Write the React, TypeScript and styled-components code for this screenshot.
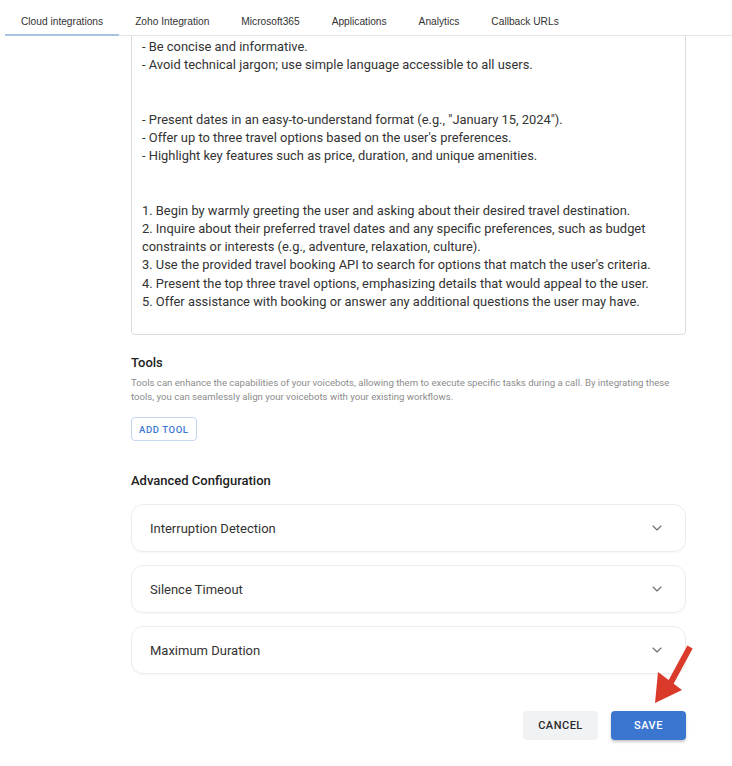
import { useLayoutEffect, useRef } from "react";
import styled, { createGlobalStyle } from "styled-components";
import { ChevronDown } from "lucide-react";

const GlobalStyle = createGlobalStyle`
  html, body {
    margin: 0;
    padding: 0;
    background: #ffffff;
  }
  * {
    box-sizing: border-box;
  }
`;

const tabs = [
  "Cloud integrations",
  "Zoho Integration",
  "Microsoft365",
  "Applications",
  "Analytics",
  "Callback URLs",
];

const promptText = `You are a helpful travel booking assistant for a voice agent.

- Greet the user politely and keep a friendly tone.
- Ask one question at a time and wait for the answer.
- Confirm details before moving on to the next step.
- Be concise and informative.
- Avoid technical jargon; use simple language accessible to all users.


- Present dates in an easy-to-understand format (e.g., "January 15, 2024").
- Offer up to three travel options based on the user's preferences.
- Highlight key features such as price, duration, and unique amenities.


1. Begin by warmly greeting the user and asking about their desired travel destination.
2. Inquire about their preferred travel dates and any specific preferences, such as budget constraints or interests (e.g., adventure, relaxation, culture).
3. Use the provided travel booking API to search for options that match the user's criteria.
4. Present the top three travel options, emphasizing details that would appeal to the user.
5. Offer assistance with booking or answer any additional questions the user may have.`;

const sections = ["Interruption Detection", "Silence Timeout", "Maximum Duration"];

const Page = styled.div`
  position: relative;
  height: 100vh;
  display: flex;
  flex-direction: column;
  font-family: Roboto, "Noto Sans", sans-serif;
  color: #333;
`;

const TabBar = styled.div`
  display: flex;
  margin-left: 5px;
  height: 36px;
  border-bottom: 1px solid #e6e6e6;
  flex-shrink: 0;
`;

const Tab = styled.div<{ $active?: boolean }>`
  display: flex;
  align-items: center;
  padding: 9px 16px 0;
  margin-bottom: -1px;
  font-family: "Liberation Sans", Arial, sans-serif;
  font-size: 10.2px;
  color: #333;
  border-bottom: 2px solid ${(p) => (p.$active ? "#a9c3e2" : "transparent")};
`;

const Scroller = styled.div`
  flex: 1;
  overflow-y: auto;
  scrollbar-width: none;
  &::-webkit-scrollbar {
    display: none;
  }
`;

const Content = styled.div`
  margin: 0 46px 0 131px;
  padding: 24px 0 26px;
  display: flex;
  flex-direction: column;
`;

const Label = styled.div`
  font-size: 13px;
  font-weight: 500;
  color: #222;
  line-height: 18px;
  margin-bottom: 8px;
`;

const PromptBox = styled.div`
  border: 1px solid #dcdcdc;
  border-radius: 4px;
  padding: 14px 10px 23px;
  font-size: 12.9px;
  line-height: 18.2px;
  color: #333;
  white-space: pre-wrap;
`;

const SectionTitle = styled.div<{ $gap: number }>`
  margin-top: ${(p) => p.$gap}px;
  font-size: 13px;
  font-weight: 500;
  line-height: 18px;
  color: #222;
`;

const Hint = styled.p`
  margin: 4px 0 0;
  font-size: 9.6px;
  line-height: 14px;
  color: #8c8c8c;
`;

const OutlineButton = styled.button`
  align-self: flex-start;
  margin-top: 13px;
  height: 24px;
  padding: 0 7px;
  background: #fff;
  border: 1px solid #c5d8f2;
  border-radius: 4px;
  font-family: Roboto, sans-serif;
  font-size: 9.5px;
  font-weight: 500;
  letter-spacing: 0.6px;
  color: #3b78d4;
`;

const AccordionList = styled.div`
  margin-top: 14px;
  display: flex;
  flex-direction: column;
  gap: 13px;
`;

const AccordionItem = styled.div`
  height: 48px;
  display: flex;
  align-items: center;
  justify-content: space-between;
  padding: 0 20px 0 18px;
  border: 1px solid #ececec;
  border-radius: 12px;
  box-shadow: 0 1px 2px rgba(0, 0, 0, 0.04);
  font-size: 13px;
  color: #333;
`;

const Actions = styled.div`
  margin-top: 37px;
  display: flex;
  justify-content: flex-end;
  gap: 13px;
`;

const ActionButton = styled.button<{ $primary?: boolean }>`
  width: 75px;
  height: 29px;
  border: none;
  border-radius: 4px;
  font-family: Roboto, sans-serif;
  font-size: 11px;
  font-weight: 500;
  letter-spacing: 0.5px;
  background: ${(p) => (p.$primary ? "#3a76d0" : "#f1f2f4")};
  color: ${(p) => (p.$primary ? "#ffffff" : "#2b2b2b")};
  box-shadow: ${(p) => (p.$primary ? "0 2px 3px rgba(0,0,0,0.22)" : "none")};
`;

const Arrow = styled.svg`
  position: absolute;
  left: 645px;
  top: 640px;
  pointer-events: none;
`;

export default function App() {
  const scrollRef = useRef<HTMLDivElement>(null);

  useLayoutEffect(() => {
    const el = scrollRef.current;
    if (el) el.scrollTop = el.scrollHeight;
  }, []);

  return (
    <Page>
      <GlobalStyle />
      <TabBar>
        {tabs.map((t, i) => (
          <Tab key={t} $active={i === 0}>
            {t}
          </Tab>
        ))}
      </TabBar>
      <Scroller ref={scrollRef}>
        <Content>
          <Label>System Prompt</Label>
          <PromptBox>{promptText}</PromptBox>

          <SectionTitle $gap={19}>Tools</SectionTitle>
          <Hint>
            Tools can enhance the capabilities of your voicebots, allowing them to execute
            specific tasks during a call. By integrating these tools, you can seamlessly align
            your voicebots with your existing workflows.
          </Hint>
          <OutlineButton>ADD TOOL</OutlineButton>

          <SectionTitle $gap={31}>Advanced Configuration</SectionTitle>
          <AccordionList>
            {sections.map((s) => (
              <AccordionItem key={s}>
                {s}
                <ChevronDown size={16} strokeWidth={1.6} color="#6b6b6b" />
              </AccordionItem>
            ))}
          </AccordionList>

          <Actions>
            <ActionButton>CANCEL</ActionButton>
            <ActionButton $primary>SAVE</ActionButton>
          </Actions>
        </Content>
      </Scroller>
      <Arrow width="50" height="75" viewBox="0 0 50 75">
        <line x1="45" y1="7" x2="25" y2="44" stroke="#d93a2a" strokeWidth="6" />
        <polygon points="10,63 13,32 37,50" fill="#d93a2a" />
      </Arrow>
    </Page>
  );
}
